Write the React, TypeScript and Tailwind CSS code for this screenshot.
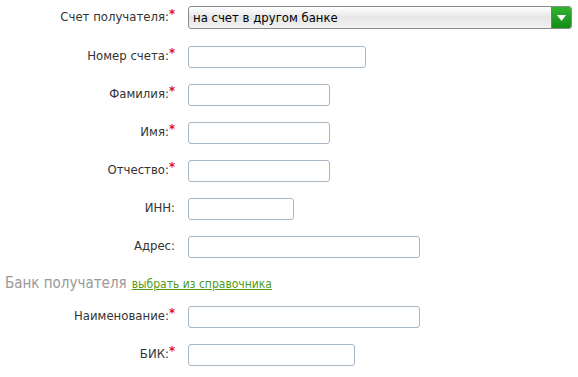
import React from "react";

type Field = { label: string; required?: boolean; width: number };

const recipientFields: Field[] = [
  { label: "Номер счета:", required: true, width: 178 },
  { label: "Фамилия:", required: true, width: 142 },
  { label: "Имя:", required: true, width: 142 },
  { label: "Отчество:", required: true, width: 142 },
  { label: "ИНН:", width: 106 },
  { label: "Адрес:", width: 232 },
];

const bankFields: Field[] = [
  { label: "Наименование:", required: true, width: 232 },
  { label: "БИК:", required: true, width: 167 },
];

const Label = ({ text, required }: { text: string; required?: boolean }) => (
  <div className="w-[188px] shrink-0 pr-[13px] text-right text-[13px] text-[#333] leading-none -mt-[3px]">
    {text}
    {required && <span className="relative -top-[3px] text-[#e01010] font-bold">*</span>}
  </div>
);

const Row = ({ field }: { field: Field }) => (
  <div className="flex items-center h-[22px]">
    <Label text={field.label} required={field.required} />
    <input
      className="h-[22px] rounded-[3px] border border-[#a9b6c4] bg-white px-1 text-[13px] outline-none"
      style={{ width: field.width }}
    />
  </div>
);

export default function App() {
  return (
    <div className="w-[578px] h-[377px] bg-white pt-[6px] font-['Tahoma','DejaVu_Sans_Condensed','DejaVu_Sans',sans-serif]">
      {/* счет получателя */}
      <div className="flex items-center h-[23px] mb-[17px]">
        <Label text="Счет получателя:" required />
        <div className="flex h-[23px] w-[384px] rounded-[3px] border border-[#8c8c8c] overflow-hidden bg-gradient-to-b from-white via-[#e6e6e6] to-[#f2f2f2]">
          <div className="flex-1 flex items-center pl-[4px] text-[13px] text-black">
            на счет в другом банке
          </div>
          <div className="w-[20px] border-l border-[#7a7a7a] bg-gradient-to-b from-[#33b333] to-[#128c12] flex items-center justify-center">
            <svg width="9" height="6" viewBox="0 0 9 6">
              <path d="M0 0 L9 0 L4.5 6 Z" fill="#fff" />
            </svg>
          </div>
        </div>
      </div>

      <div className="flex flex-col gap-[16px]">
        {recipientFields.map((f) => (
          <Row key={f.label} field={f} />
        ))}
      </div>

      {/* банк получателя */}
      <div className="flex items-baseline h-[48px] pt-[14px] pl-[5px]">
        <span className="text-[15px] text-[#999]">Банк получателя</span>
        <a href="#" className="ml-[5px] text-[12px] text-[#4f9b1a] underline">
          выбрать из справочника
        </a>
      </div>

      <div className="flex flex-col gap-[16px]">
        {bankFields.map((f) => (
          <Row key={f.label} field={f} />
        ))}
      </div>
    </div>
  );
}
